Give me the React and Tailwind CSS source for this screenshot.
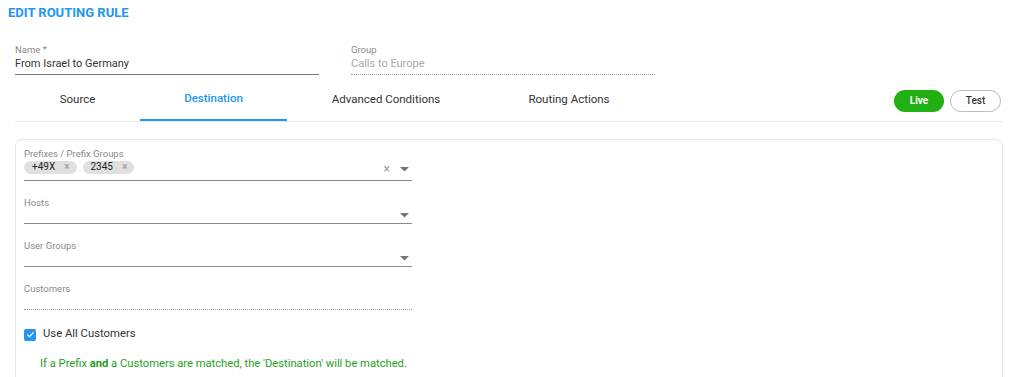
import React from 'react';

const font = { fontFamily: 'Roboto, "Liberation Sans", sans-serif' };

const Caret = () => (
  <svg width="9" height="5" viewBox="0 0 9 5" className="shrink-0 mr-[3px]">
    <path d="M0 0h9L4.5 4.5z" fill="#757575" />
  </svg>
);

const Chip = ({ label }) => (
  <span className="inline-flex items-center h-[13px] rounded-full bg-[#e0e0e0] pl-[8px] pr-[7px] text-[10px] text-[#222] leading-none">
    {label}
    <span className="ml-[9px] text-[10px] font-bold text-[#a0a0a0]">×</span>
  </span>
);

const SelectField = ({ label, children, dotted, clear, caret = true, h = 'h-[16px]' }) => (
  <div className="w-[388px]">
    <p className="h-[10px] text-[9.5px] text-[#8a8a8a] leading-[10px]">{label}</p>
    <div
      className={`flex items-center ${h} ${
        dotted ? 'border-b border-dotted border-[#9e9e9e]' : 'border-b border-[#8a8a8a]'
      }`}
    >
      <div className="flex flex-1 items-center gap-[6px] self-start">{children}</div>
      {clear && <span className="text-[12px] text-[#999] mr-[10px] leading-none">×</span>}
      {caret && <Caret />}
    </div>
  </div>
);

const tabs = [
  { label: 'Source', w: 'w-[125px]' },
  { label: 'Destination', w: 'w-[147px]', active: true },
  { label: 'Advanced Conditions', w: 'w-[198px]' },
  { label: 'Routing Actions', w: 'w-[168px]' },
];

export default function App() {
  return (
    <div className="w-[1010px] h-[377px] overflow-hidden bg-white" style={font}>
      <h1 className="pl-[8px] pt-[6px] text-[13px] font-bold text-[#2196f3] leading-[14px]">
        EDIT ROUTING RULE
      </h1>

      <div className="flex gap-[32px] pl-[15px] pt-[25px]">
        <div className="w-[304px]">
          <p className="text-[9.5px] text-[#8a8a8a] leading-none">Name *</p>
          <div className="h-[20px] flex items-center border-b border-[#777] text-[11px] text-[#333]">
            From Israel to Germany
          </div>
        </div>
        <div className="w-[304px]">
          <p className="text-[9.5px] text-[#8a8a8a] leading-none">Group</p>
          <div className="h-[20px] flex items-center border-b border-dotted border-[#9e9e9e] text-[11px] text-[#aaa]">
            Calls to Europe
          </div>
        </div>
      </div>

      <div className="ml-[15px] mr-[7px] mt-[6px] flex items-center border-b border-[#ececec] h-[41px]">
        {tabs.map((t) => (
          <div
            key={t.label}
            className={`${t.w} h-full flex items-center justify-center text-[11.5px] pb-[1px] ${
              t.active ? 'text-[#2196f3] font-medium border-b-2 border-[#2196f3]' : 'text-[#333]'
            }`}
          >
            {t.label}
          </div>
        ))}
        <div className="ml-auto mr-[2px] flex gap-[6px]">
          <button className="h-[22px] w-[50px] rounded-full bg-[#21b014] text-white text-[10px] font-bold">
            Live
          </button>
          <button className="h-[22px] w-[51px] rounded-full border border-[#bdbdbd] bg-white text-[#333] text-[10px] font-medium">
            Test
          </button>
        </div>
      </div>

      <div className="ml-[15px] mr-[7px] mt-[17px] h-[300px] rounded-[7px] border border-[#e6e6e6] pl-[8px] pt-[9px] flex flex-col gap-[17px]">
        <SelectField label="Prefixes / Prefix Groups" clear h="h-[22px]">
          <div className="flex gap-[6px] pt-[2px]">
            <Chip label="+49X" />
            <Chip label="2345" />
          </div>
        </SelectField>
        <SelectField label="Hosts" />
        <SelectField label="User Groups" />
        <SelectField label="Customers" dotted caret={false} />
        <div className="mt-[2px] flex items-center gap-[7px] h-[12px]">
          <span className="w-[12px] h-[12px] rounded-[2px] bg-[#2196f3] flex items-center justify-center">
            <svg width="9" height="9" viewBox="0 0 10 10">
              <path d="M1.5 5.2l2.3 2.3 4.7-5" stroke="#fff" strokeWidth="1.3" fill="none" />
            </svg>
          </span>
          <span className="text-[11.3px] text-[#333]">Use All Customers</span>
        </div>
        <p className="-mt-[2px] pl-[16px] text-[11.2px] leading-[16px] text-[#1ea01e]">
          If a Prefix <b className="font-bold">and</b> a Customers are matched, the 'Destination' will be matched.
        </p>
      </div>
    </div>
  );
}
